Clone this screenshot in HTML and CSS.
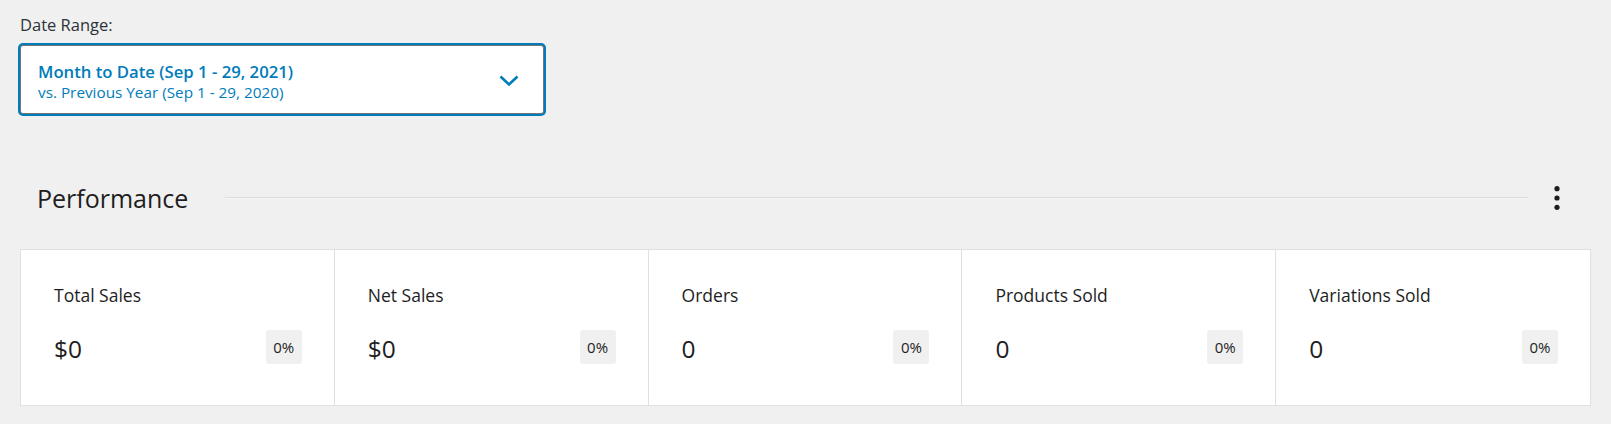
FILE: index.html
```html
<!DOCTYPE html>
<html lang="en">
<head>
<meta charset="utf-8">
<title>Analytics Overview</title>
<link rel="stylesheet" href="styles.css">
</head>
<body>
<div class="page">
  <div class="date-range">
    <div class="date-label">Date Range:</div>
    <button class="dropdown" type="button">
      <span class="dropdown-text">
        <span class="dropdown-primary">Month to Date (Sep 1 - 29, 2021)</span>
        <span class="dropdown-secondary">vs. Previous Year (Sep 1 - 29, 2020)</span>
      </span>
      <svg class="chevron" width="20" height="12" viewBox="0 0 20 12" aria-hidden="true">
        <polyline points="1.5,1.5 10,9.5 18.5,1.5" fill="none" stroke="#007cba" stroke-width="2.6" stroke-linejoin="miter"/>
      </svg>
    </button>
  </div>

  <section class="performance">
    <div class="section-header">
      <h2 class="section-title">Performance</h2>
      <span class="section-rule"></span>
      <button class="more" type="button" aria-label="Choose which analytics to display">
        <svg width="24" height="30" viewBox="0 0 24 30" aria-hidden="true">
          <circle cx="12" cy="5.7" r="2.6" fill="#1e1e1e"/>
          <circle cx="12" cy="15" r="2.6" fill="#1e1e1e"/>
          <circle cx="12" cy="24.3" r="2.6" fill="#1e1e1e"/>
        </svg>
      </button>
    </div>

    <ul class="summary">
      <li class="summary-item">
        <div class="item-label">Total Sales</div>
        <div class="item-data"><span class="item-value">$0</span><span class="item-delta">0%</span></div>
      </li>
      <li class="summary-item">
        <div class="item-label">Net Sales</div>
        <div class="item-data"><span class="item-value">$0</span><span class="item-delta">0%</span></div>
      </li>
      <li class="summary-item">
        <div class="item-label">Orders</div>
        <div class="item-data"><span class="item-value">0</span><span class="item-delta">0%</span></div>
      </li>
      <li class="summary-item">
        <div class="item-label">Products Sold</div>
        <div class="item-data"><span class="item-value">0</span><span class="item-delta">0%</span></div>
      </li>
      <li class="summary-item">
        <div class="item-label">Variations Sold</div>
        <div class="item-data"><span class="item-value">0</span><span class="item-delta">0%</span></div>
      </li>
    </ul>
  </section>
</div>
</body>
</html>
```

FILE: styles.css
```css
* {
  box-sizing: border-box;
}

html, body {
  margin: 0;
  background: #f0f0f0;
}

body {
  font-family: "Open Sans", "Noto Sans", sans-serif;
  color: #1e1e1e;
}

.page {
  padding: 14px 20px 0 20px;
}

.date-label {
  font-size: 16.5px;
  line-height: 22px;
  color: #2c3338;
}

.dropdown {
  margin-top: 9px;
  width: 524px;
  height: 69px;
  display: flex;
  align-items: center;
  justify-content: space-between;
  padding: 0 24px 0 17px;
  background: #fff;
  border: 1px solid #757575;
  border-radius: 3px;
  box-shadow: 0 0 0 2px #007cba;
  font-family: inherit;
  text-align: left;
  cursor: pointer;
}

.dropdown-text {
  display: flex;
  flex-direction: column;
  padding-top: 4px;
  color: #007cba;
}

.dropdown-primary {
  font-size: 16.7px;
  line-height: 20px;
  font-weight: 600;
}

.dropdown-secondary {
  font-size: 15.3px;
  line-height: 20px;
}

.chevron {
  display: block;
  margin-top: 3px;
}

.performance {
  margin-top: 68px;
}

.section-header {
  display: flex;
  align-items: center;
  height: 32px;
  padding: 0 22px 0 17px;
}

.section-title {
  margin: 0;
  font-size: 25px;
  line-height: 32px;
  font-weight: 400;
  color: #1e1e1e;
}

.section-rule {
  flex: 1;
  height: 2px;
  margin: 0 17px 0 37px;
  border-top: 1px solid #dcdcdc;
  border-bottom: 1px solid #f6f6f6;
}

.more {
  display: flex;
  width: 24px;
  height: 30px;
  padding: 0;
  border: 0;
  background: transparent;
  cursor: pointer;
}

.summary {
  list-style: none;
  margin: 35px 0 0 0;
  padding: 0;
  display: grid;
  grid-template-columns: repeat(5, 1fr);
  background: #fff;
  border: 1px solid #e0e0e0;
}

.summary-item {
  padding: 33px 32px 39px 33px;
  border-right: 1px solid #e0e0e0;
}

.summary-item:last-child {
  border-right: 0;
}

.item-label {
  font-size: 17.5px;
  line-height: 24px;
  color: #1e1e1e;
}

.item-data {
  margin-top: 21px;
  display: flex;
  align-items: center;
  justify-content: space-between;
}

.item-value {
  padding-top: 4px;
  font-size: 24.5px;
  line-height: 34px;
  color: #1e1e1e;
}

.item-delta {
  display: flex;
  align-items: center;
  justify-content: center;
  width: 36px;
  height: 34px;
  border-radius: 3px;
  background: #f0f0f0;
  font-size: 15px;
  color: #1e1e1e;
}
```
